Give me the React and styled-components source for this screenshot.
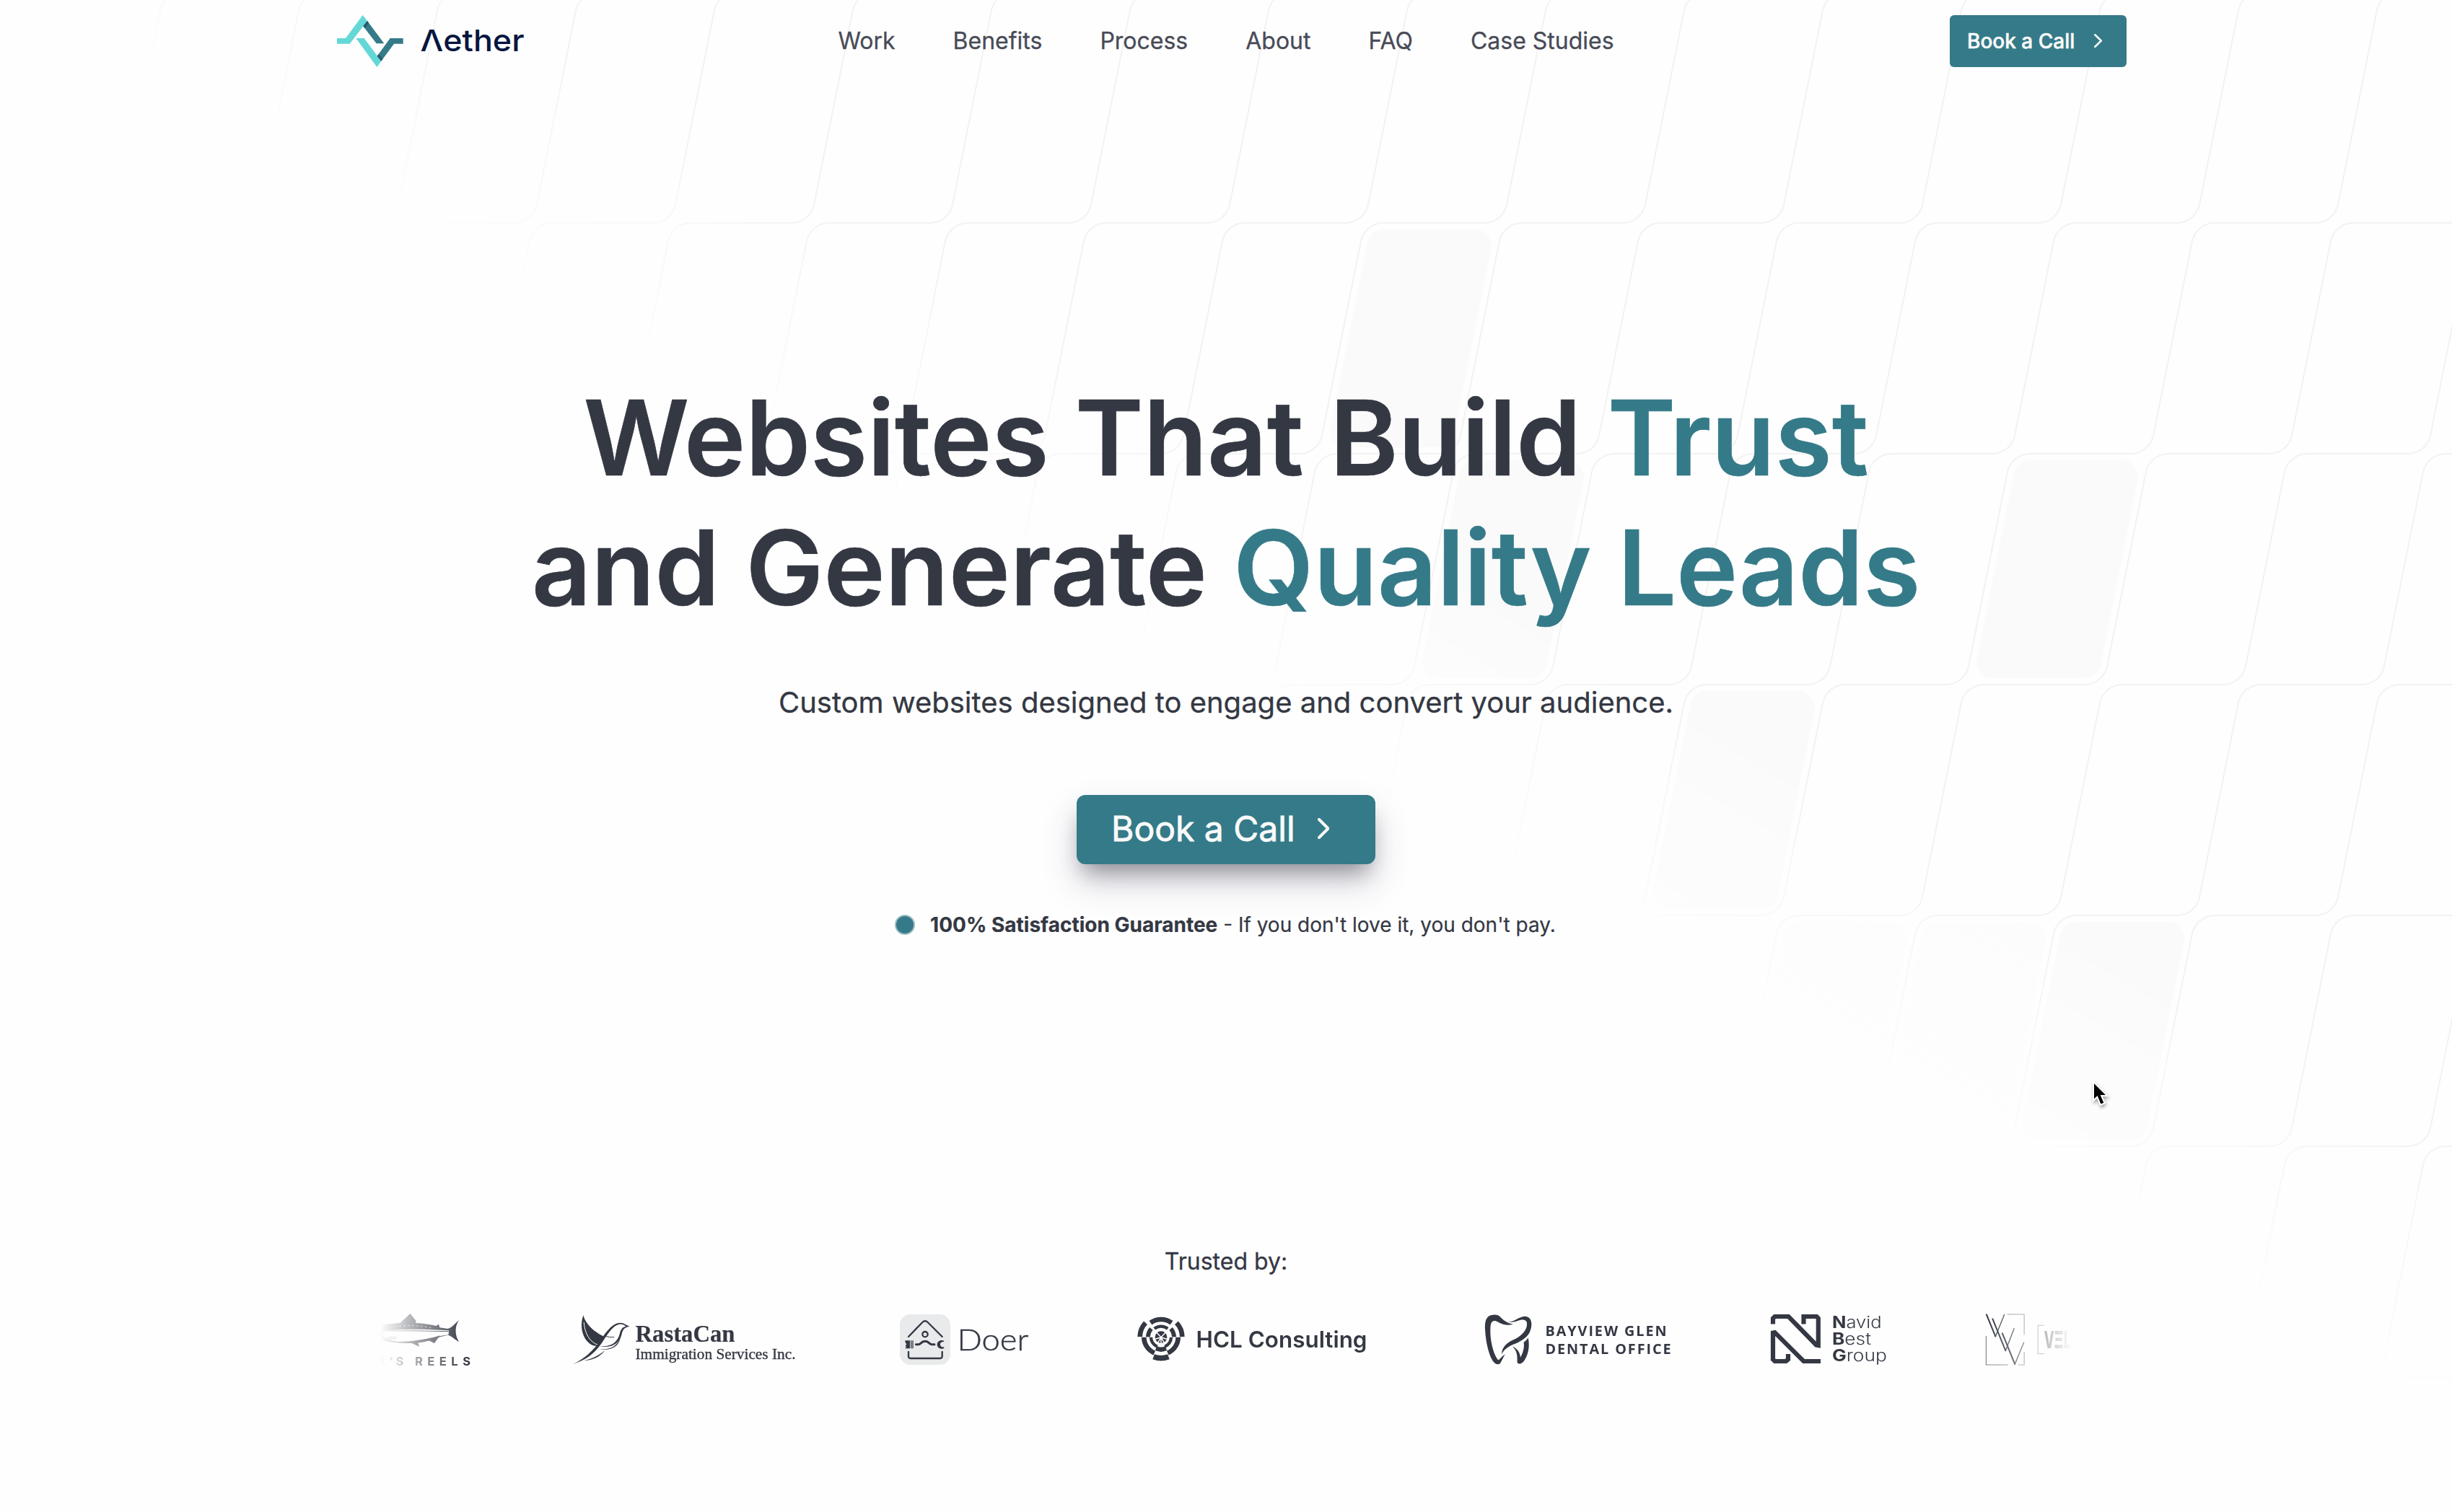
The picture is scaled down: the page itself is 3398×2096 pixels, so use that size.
import React from "react";
import styled, { createGlobalStyle } from "styled-components";

const INK = "#343843";
const TEAL = "#357a88";

const GlobalStyle = createGlobalStyle`
  * { box-sizing: border-box; }
  body {
    margin: 0;
    background: #fefefe;
    color: ${INK};
    font-family: Inter, "Liberation Sans", sans-serif;
    overflow: hidden;
  }
`;

const Page = styled.div`
  position: relative;
  display: flex;
  flex-direction: column;
  width: 3398px;
  height: 2096px;
  overflow: hidden;
`;

const Backdrop = styled.svg`
  position: absolute;
  top: -11px;
  left: 0;
  width: 100%;
  height: 2000px;
  mask-image: linear-gradient(to bottom left, white 40%, transparent 50%);
`;

const Header = styled.header`
  position: relative;
  display: grid;
  grid-template-columns: 1fr auto 1fr;
  align-items: center;
  height: 114px;
  padding: 0 451px 0 467px;
`;

const Brand = styled.a`
  display: flex;
  align-items: center;
`;

const Nav = styled.nav`
  display: flex;
  gap: 80px;
  transform: translateX(-8px);
`;

const NavLink = styled.a`
  font-size: 32px;
  line-height: 48px;
  color: #484b57;
  white-space: nowrap;
  -webkit-text-stroke: 0.3px currentColor;
`;

const Button = styled.a`
  display: inline-flex;
  align-items: center;
  justify-content: space-between;
  color: #fafafa;
  background: ${TEAL};
  white-space: nowrap;
  width: ${(p) => (p.$large ? "414px" : "245px")};
  height: ${(p) => (p.$large ? "96px" : "72px")};
  padding: ${(p) => (p.$large ? "0 64px 3px 48px" : "0 34px 0 24px")};
  border-radius: ${(p) => (p.$large ? "12px" : "6px")};
  font-size: ${(p) => (p.$large ? "48px" : "28px")};
  font-weight: ${(p) => (p.$large ? 400 : 500)};
  -webkit-text-stroke: ${(p) => (p.$large ? "0.8px" : "0.5px")} currentColor;
  justify-self: end;
  box-shadow: ${(p) =>
    p.$large
      ? "0 25px 50px rgba(50, 50, 93, 0.2), 0 20px 30px -10px rgba(0, 0, 0, 0.36)"
      : "none"};
`;

const Hero = styled.main`
  position: relative;
  display: flex;
  flex-direction: column;
  align-items: center;
  padding-top: 403px;
`;

const Title = styled.h1`
  margin: 0;
  font-size: 144px;
  line-height: 180px;
  font-weight: 600;
  text-align: center;
  white-space: nowrap;
  -webkit-text-stroke: 0.6px currentColor;
`;

const Accent = styled.span`
  color: ${TEAL};
`;

const Subtitle = styled.p`
  margin: 69px 0 100px;
  font-size: 40px;
  line-height: 56px;
  -webkit-text-stroke: 0.3px currentColor;
`;

const Guarantee = styled.p`
  display: flex;
  align-items: center;
  gap: 21px;
  margin: 64px 0 0;
  padding-right: 2px;
  font-size: 28px;
  line-height: 40px;
  -webkit-text-stroke: 0.2px currentColor;
`;

const Dot = styled.span`
  width: 28px;
  height: 28px;
  border-radius: 50%;
  background: ${TEAL};
  border: 2px solid #9dc0c6;
`;

const Trusted = styled.section`
  position: relative;
  display: flex;
  flex-direction: column;
  align-items: center;
  margin-top: 423px;
`;

const TrustedLabel = styled.h2`
  margin: 0 0 42px;
  font-size: 32px;
  line-height: 48px;
  font-weight: 400;
  -webkit-text-stroke: 0.3px currentColor;
`;

const Marquee = styled.div`
  display: flex;
  gap: 134px;
  width: 2344px;
  height: 80px;
  overflow: hidden;
  mask-image: linear-gradient(to right, transparent, black 5%, black 95%, transparent);
`;

const LogoArt = styled.svg`
  flex: none;
  display: block;
  width: ${(p) => p.$w}px;
  height: 80px;
  fill: ${INK};
`;

const Cursor = styled.svg`
  position: absolute;
  left: 2892px;
  top: 1492px;
  width: 44px;
  height: 52px;
  filter: drop-shadow(1px 3px 2px rgba(0, 0, 0, 0.35));
`;

const GRID_PATH =
  "M128 0 98.572 147.138A16 16 0 0 1 82.883 160H13.117a16 16 0 0 0-15.69 12.862l-26.855 134.276A16 16 0 0 1-45.117 320H-116M64-160 34.572-12.862A16 16 0 0 1 18.883 0h-69.766a16 16 0 0 0-15.69 12.862l-26.855 134.276A16 16 0 0 1-109.117 160H-180M192 160l-29.428 147.138A15.999 15.999 0 0 1 146.883 320H77.117a16 16 0 0 0-15.69 12.862L34.573 467.138A16 16 0 0 1 18.883 480H-52M-136 480h58.883a16 16 0 0 0 15.69-12.862l26.855-134.276A16 16 0 0 1-18.883 320h69.766a16 16 0 0 0 15.69-12.862l26.855-134.276A16 16 0 0 1 109.117 160H192M-72 640h58.883a16 16 0 0 0 15.69-12.862l26.855-134.276A16 16 0 0 1 45.117 480h69.766a15.999 15.999 0 0 0 15.689-12.862l26.856-134.276A15.999 15.999 0 0 1 173.117 320H256M-200 320h58.883a15.999 15.999 0 0 0 15.689-12.862l26.856-134.276A16 16 0 0 1-82.883 160h69.766a16 16 0 0 0 15.69-12.862L29.427 12.862A16 16 0 0 1 45.117 0H128";
const BLOCK_PATH =
  "M45.119 4.5a11.5 11.5 0 0 0-11.277 9.245l-25.6 128C6.82 148.861 12.262 155.5 19.52 155.5h63.366a11.5 11.5 0 0 0 11.277-9.245l25.6-128c1.423-7.116-4.02-13.755-11.277-13.755H45.119Z";
const BLOCKS = [
  [1, 1],
  [2, 2],
  [4, 3],
  [6, 2],
  [7, 4],
];
const FAINT_BLOCKS = [
  [5, 4],
  [6, 4],
];

function GridBackdrop() {
  const place = ([x, y]) => `translate(${-32 * y + 96 * x} ${160 * y})`;
  return (
    <Backdrop aria-hidden="true">
      <defs>
        <pattern id="grid" width="96" height="480" patternUnits="userSpaceOnUse" patternTransform="translate(1699 0) scale(2)">
          <path d={GRID_PATH} fill="none" stroke="#0a0a0a" strokeOpacity="0.05" />
        </pattern>
      </defs>
      <rect width="100%" height="100%" fill="url(#grid)" />
      <g transform="translate(1699 0) scale(2)" fill="#fafafa">
        {BLOCKS.map((b) => (
          <path key={b.join()} d={BLOCK_PATH} transform={place(b)} />
        ))}
        {FAINT_BLOCKS.map((b) => (
          <path key={b.join()} d={BLOCK_PATH} transform={place(b)} opacity="0.3" />
        ))}
      </g>
    </Backdrop>
  );
}

function AetherLogo() {
  return (
    <svg width="262" height="74" viewBox="467 20 262 74">
      <g transform="translate(440 0) scale(.33333)">
        <path fill="#64d8d7" d="M80 159H117L188 63 207 87 134 182H80Z" />
        <path fill={TEAL} d="M207 87 277 181H245L190 109Z" />
        <path fill="#27566d" d="M207 87 213 95 197 118 190 109Z" />
        <path fill="#64d8d7" d="M160 159H194L265 254 247 279Z" />
        <path fill={TEAL} d="M248 233 302 159H356V182H318L265 254Z" />
        <path fill="#27566d" d="M248 233 254 225 271 246 265 254Z" />
      </g>
      <text x="582.5" y="71" fontSize="41.5" fontWeight="500" fill="#07163f" textLength="144" lengthAdjust="spacingAndGlyphs">
        Λether
      </text>
    </svg>
  );
}

function Chevron({ w, h, sw }) {
  return (
    <svg width={w + sw} height={h + sw} viewBox={`${-sw / 2} ${-sw / 2} ${w + sw} ${h + sw}`}>
      <path d={`M0 0L${w} ${h / 2}L0 ${h}`} fill="none" stroke="#fafafa" strokeWidth={sw} strokeLinecap="round" strokeLinejoin="round" />
    </svg>
  );
}

const line = { fill: "none", stroke: INK, vectorEffect: "non-scaling-stroke", strokeLinecap: "round", strokeLinejoin: "round" };

function ReelsLogo() {
  return (
    <LogoArt $w={132} viewBox="528 1815 132 80">
      <g transform="translate(500 1720) scale(.408163 .33333)">
        <path d="M40 362C100 336 200 336 258 354L267 347 270 361 298 366C314 360 325 340 336 330 320 355 322 398 336 420 320 410 310 395 298 392L272 400C255 408 230 420 200 424 150 430 100 424 60 410Z" />
        <path fill="#fefefe" d="M80 376C140 365 230 368 302 373L300 391C262 396 200 420 130 420 95 416 70 400 80 376Z" />
        <path d="M136 342 170 303 190 333 188 344ZM166 421 201 440 196 422ZM228 412 252 426 271 394Z" />
        <path d="M88 405C95 396 115 396 127 402 118 413 96 418 88 405Z" opacity=".45" />
        <path {...line} strokeWidth="1" d="M86 376C150 372 230 376 300 377" />
        <path {...line} stroke="#fefefe" strokeWidth="1" strokeDasharray="1 5" d="M120 356C160 350 200 352 240 362" />
      </g>
      <g fontSize="16.5" fontWeight="700">
        <text y="1893" x="482 497 518 540.5 549.5">TOM'S</text>
        <text x="576" y="1893" textLength="77">REELS</text>
      </g>
    </LogoArt>
  );
}

function RastaCanLogo() {
  return (
    <LogoArt $w={316} viewBox="794 1815 316 80">
      <g transform="translate(500 1720) scale(.408163 .33333)">
        <path d="M758 310C746 350 752 402 780 428 790 437 803 440 811 434L832 400C800 384 766 350 758 310Z" />
        <path {...line} stroke="#fefefe" strokeWidth="1" d="M760 340C762 385 782 424 806 432" />
        <path d="M722 513C762 492 795 450 810 425 835 380 855 341 885 341 897 342 905 353 916 356 905 358 895 362 890 380 884 420 862 450 810 438 850 444 874 425 882 385 886 362 895 358 903 356 895 350 888 346 882 347 858 350 840 390 818 430 795 470 765 498 722 513Z" />
        <path d="M806 449C848 456 872 440 884 402 880 436 855 462 806 449ZM760 498C790 492 812 474 832 456 815 482 790 497 760 498Z" />
        <path {...line} strokeWidth="1" d="M830 396C842 400 852 402 862 401" />
      </g>
      <g fontFamily="'Liberation Serif', serif" stroke={INK}>
        <text x="881.5" y="1860" fontSize="34" fontWeight="700" strokeWidth=".2" textLength="138" lengthAdjust="spacingAndGlyphs">RastaCan</text>
        <text x="881.5" y="1884.3" fontSize="20" strokeWidth=".35" textLength="222" lengthAdjust="spacingAndGlyphs">Immigration Services Inc.</text>
      </g>
    </LogoArt>
  );
}

function DoerLogo() {
  return (
    <LogoArt $w={198} viewBox="1244 1815 198 80">
      <g transform="translate(1240 1810) scale(.33333)">
        <rect x="24" y="36" width="210" height="210" rx="44" fill="#e9eaec" />
        <g fill="none" stroke={INK} strokeLinecap="round" strokeLinejoin="round">
          <path strokeWidth="7" d="M60 129 118 69Q129 58 140 69L200 129" />
          <circle cx="129" cy="119" r="11" strokeWidth="7" />
          <path strokeWidth="9" d="M91 161H101Q106 161 110 157 119 148 129 148 139 148 148 157 152 161 157 161H168" />
          <path strokeWidth="7" d="M60 192V211Q60 219 68 219H192Q200 219 200 211V192" />
        </g>
        <path d="M46 145H66V178H46L51 171 47 167 52 160 47 154ZM69 145H73V178H69ZM76 145H80V178H76ZM209 147C196 139 179 147 179 161 179 176 196 184 209 176L206 172C196 172 192 168 192 161 192 154 196 150 206 150Z" />
      </g>
      <text x="1327.5" y="1871.7" fontSize="42" fontWeight="300" fontFamily="Lato, sans-serif" stroke={INK} strokeWidth=".5" textLength="99" lengthAdjust="spacingAndGlyphs">Doer</text>
    </LogoArt>
  );
}

const HCL_SEGMENTS = [
  [74, 20, 234, 306],
  [88, 20, 181, 223],
  [88, 20, 317, 359],
  [71, 20, 113, 180],
  [71, 20, 0, 67],
  [87, 22, 69, 111],
  [45, 13, 232, 308],
  [54, 18, 181, 221],
  [54, 18, 319, 359],
  [42, 13, 112, 179],
  [42, 13, 1, 68],
  [51, 19, 66, 114],
];

function ringArc(r, a0, a1) {
  const at = (a) => {
    const t = (a * Math.PI) / 180;
    return `${(1110 + r * Math.cos(t)).toFixed(2)} ${(131 + r * Math.sin(t)).toFixed(2)}`;
  };
  return `M${at(a0)}A${r} ${r} 0 0 1 ${at(a1)}`;
}

function HclLogo() {
  return (
    <LogoArt $w={346} viewBox="1576 1815 346 80">
      <g transform="translate(1240 1810) scale(.33333)">
        {HCL_SEGMENTS.map(([r, w, a, b]) => (
          <path key={`${r}-${a}`} d={ringArc(r, a, b)} fill="none" stroke={INK} strokeWidth={w} />
        ))}
        <circle cx="1110" cy="131" r="25" />
        <path stroke="#fefefe" strokeWidth="4.5" d="M1110 131V160M1110 131 1088 108M1110 131 1132 108M1110 131 1082 140M1110 131 1138 140M1110 131 1095 158M1110 131 1125 158" />
      </g>
      <text x="1658.5" y="1868" fontSize="31" fontWeight="600" textLength="237" lengthAdjust="spacingAndGlyphs">HCL Consulting</text>
    </LogoArt>
  );
}

function BayviewLogo() {
  return (
    <LogoArt $w={262} viewBox="2056 1815 262 80">
      <g transform="translate(2030 1790) scale(.561224 .33333)">
        <path d="M72 98C54 99 50 125 52 165 54 220 63 275 73 294 80 308 88 306 91 294L101 262C95 268 88 285 84 286 72 262 63 200 65 150 66 122 73 118 84 128 96 141 110 143 121 137 106 133 97 120 90 108 86 100 80 97 72 98Z" />
        <path d="M107 125C126 130 130 108 149 104 168 104 170 140 162 170 155 195 136 212 120 222 108 232 98 242 93 262 92 238 104 216 118 205 142 188 157 160 155 132 153 114 140 118 132 123 124 129 115 130 107 125Z" />
        <path d="M158 193C163 230 158 270 146 294 139 305 131 304 131 292 132 268 130 246 119 229 131 238 138 255 139 275 147 252 149 228 147 213 152 207 156 200 158 193Z" />
      </g>
      <g fontFamily="'Open Sans', sans-serif" fontWeight="700" fontSize="19.8">
        <text x="2142.5" y="1852" textLength="168">BAYVIEW GLEN</text>
        <text x="2142.5" y="1877.3" textLength="174">DENTAL OFFICE</text>
      </g>
    </LogoArt>
  );
}

function NavidLogo() {
  return (
    <LogoArt $w={166} viewBox="2452 1815 166 80">
      <g fill="none" stroke={INK} strokeWidth="6.2">
        <path d="M2458 1835.5V1827.5L2460.5 1825H2479.5L2518 1864.5 2520.8 1865V1827.5L2518.5 1825H2500.5V1835.5" />
        <path d="M2524 1887H2500.5L2460.5 1847 2458 1847.5V1884.5L2460.5 1887H2476L2479 1884.5V1877" />
      </g>
      <g fontSize="22.5" fontWeight="300">
        <text x="2540" y="1841" textLength="68.5" lengthAdjust="spacingAndGlyphs"><tspan fontWeight="700">N</tspan>avid</text>
        <text x="2540" y="1864" textLength="54" lengthAdjust="spacingAndGlyphs"><tspan fontWeight="700">B</tspan>est</text>
        <text x="2540" y="1887" textLength="76" lengthAdjust="spacingAndGlyphs"><tspan fontWeight="700">G</tspan>roup</text>
      </g>
    </LogoArt>
  );
}

function VelLogo() {
  return (
    <LogoArt $w={160} viewBox="2752 1815 160 80">
      <g transform="translate(2030 1790) scale(.561224 .33333)">
        <path {...line} opacity=".6" strokeWidth="1.2" d="M1342 96H1383V180M1289 187V306H1342M1369 306H1383V253M1432 142H1417V260H1432" />
        <path {...line} strokeWidth="2" d="M1290 97 1312 188M1305 115 1337 247M1329 175 1360 303" />
        <path {...line} strokeWidth="1.3" d="M1312 188 1334 97M1337 247 1358 155M1360 303 1382 213" />
      </g>
      <text x="2833.5" y="1869" fontSize="33" fontWeight="800" textLength="38" lengthAdjust="spacingAndGlyphs">VΞL</text>
    </LogoArt>
  );
}

const NAV_ITEMS = ["Work", "Benefits", "Process", "About", "FAQ", "Case Studies"];

export default function App() {
  return (
    <Page>
      <GlobalStyle />
      <GridBackdrop />
      <Header>
        <Brand>
          <AetherLogo />
        </Brand>
        <Nav>
          {NAV_ITEMS.map((item) => (
            <NavLink key={item}>{item}</NavLink>
          ))}
        </Nav>
        <Button>
          Book a Call
          <Chevron w={8.5} h={16.5} sw={2.6} />
        </Button>
      </Header>
      <Hero>
        <Title>
          Websites That Build <Accent>Trust</Accent>
          <br />
          and Generate <Accent>Quality Leads</Accent>
        </Title>
        <Subtitle>Custom websites designed to engage and convert your audience.</Subtitle>
        <Button $large>
          Book a Call
          <Chevron w={12.5} h={25} sw={4} />
        </Button>
        <Guarantee>
          <Dot />
          <span>
            <b>100% Satisfaction Guarantee</b> - If you don't love it, you don't pay.
          </span>
        </Guarantee>
      </Hero>
      <Trusted>
        <TrustedLabel>Trusted by:</TrustedLabel>
        <Marquee>
          <ReelsLogo />
          <RastaCanLogo />
          <DoerLogo />
          <HclLogo />
          <BayviewLogo />
          <NavidLogo />
          <VelLogo />
        </Marquee>
      </Trusted>
      <Cursor viewBox="2892 1492 44 52" aria-hidden="true">
        <path
          transform="translate(2880 1480) scale(.33333)"
          d="M66 66V130L80 117 94 151 106 146 92 114H114Z"
          fill="#000"
          stroke="#fff"
          strokeWidth="12"
          paintOrder="stroke"
        />
      </Cursor>
    </Page>
  );
}
